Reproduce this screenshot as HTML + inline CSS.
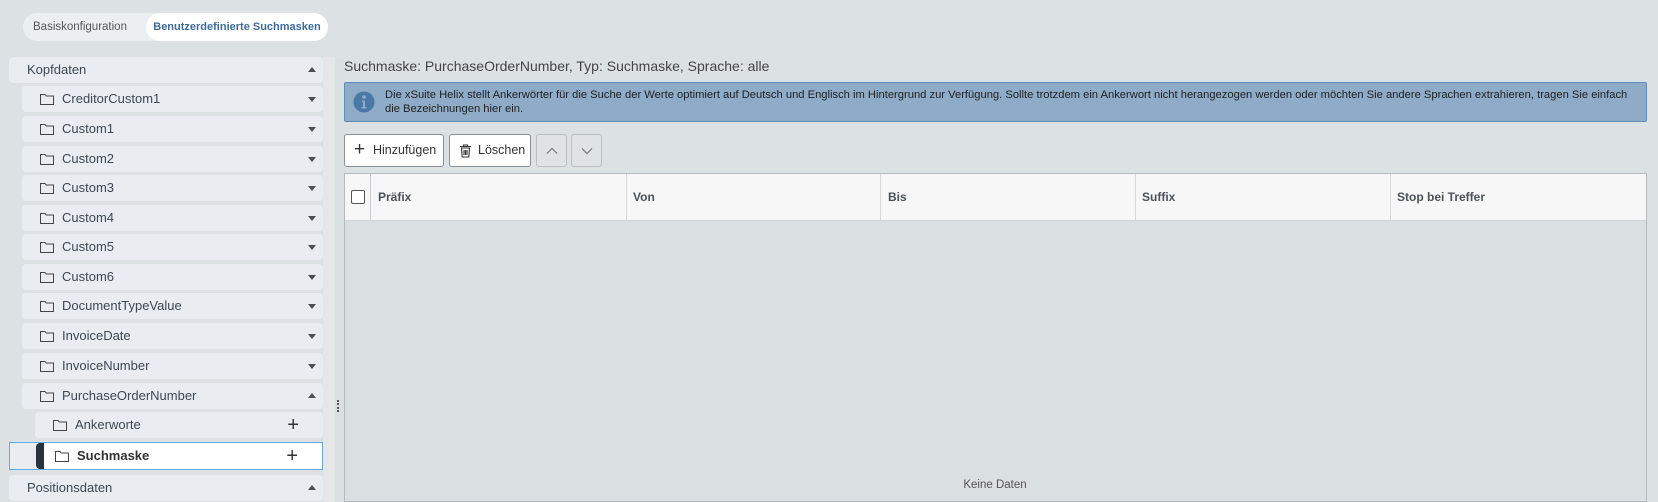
<!DOCTYPE html>
<html><head><meta charset="utf-8"><style>
*{box-sizing:border-box;margin:0;padding:0}
body{width:1658px;height:502px;overflow:hidden;background:#dce1e4;font-family:"Liberation Sans",sans-serif;color:#3e4852;position:relative}
.a{position:absolute}
.pill{left:23px;top:13px;width:305px;height:28px;background:#eceff1;border-radius:14px}
.tab1{left:33px;top:13px;height:28px;line-height:28px;font-size:11.5px;color:#555}
.tab2{left:146px;top:13px;width:182px;height:28px;line-height:28px;background:#fff;border-radius:14px;font-size:11px;font-weight:bold;color:#3d6c9c;text-align:center}
.it{height:26px;background:#e9edf1;border-radius:4px;font-size:13px;line-height:26px;right:1335px}
.it svg.f{position:absolute;top:7px}
.caret{position:absolute;right:7px;top:11px;width:0;height:0;border-left:4.5px solid transparent;border-right:4.5px solid transparent}
.dn{border-top:5px solid #4a4f55}
.up{top:10px;border-bottom:5px solid #4a4f55}
.plus{position:absolute;right:24px;top:0;font-size:20px;color:#333;font-weight:normal}
.strip{left:323px;top:57px;width:12px;height:445px;background:#e6e6e6}
.btn{top:134px;height:33px;background:#fff;border:1px solid #8a9199;border-radius:3px;font-size:12.5px;line-height:31px;color:#333}
.btnd{top:134px;height:33px;background:#dfe3e6;border:1px solid #b8bec3;border-radius:3px}
.th{font-size:12px;font-weight:bold;color:#4a525a}
</style></head><body>
<div class="a pill"></div>
<div class="a tab1">Basiskonfiguration</div>
<div class="a tab2">Benutzerdefinierte Suchmasken</div>

<div class="a strip"></div>
<div class="a" style="left:335px;top:57px;width:9px;height:445px;background:#dadfe2"></div>
<div class="a" style="left:337px;top:400px;width:2px;height:12px;border-left:2px dotted #555"></div>

<div class="a it" style="left:9px;top:57px;padding-left:18px">Kopfdaten<span class="caret up"></span></div>

<svg width="0" height="0" style="position:absolute"><defs><symbol id="fd" viewBox="0 0 14 12"><path d="M0.5 1.5h4.5l1.2 1.5h7.3v8.5H0.5z" fill="none" stroke="#444" stroke-width="1"/></symbol></defs></svg>

<div class="a it" style="left:22px;top:86px;padding-left:40px"><svg class="f" style="left:18px" width="14" height="12"><use href="#fd"/></svg>CreditorCustom1<span class="caret dn"></span></div>
<div class="a it" style="left:22px;top:116px;padding-left:40px"><svg class="f" style="left:18px" width="14" height="12"><use href="#fd"/></svg>Custom1<span class="caret dn"></span></div>
<div class="a it" style="left:22px;top:146px;padding-left:40px"><svg class="f" style="left:18px" width="14" height="12"><use href="#fd"/></svg>Custom2<span class="caret dn"></span></div>
<div class="a it" style="left:22px;top:175px;padding-left:40px"><svg class="f" style="left:18px" width="14" height="12"><use href="#fd"/></svg>Custom3<span class="caret dn"></span></div>
<div class="a it" style="left:22px;top:205px;padding-left:40px"><svg class="f" style="left:18px" width="14" height="12"><use href="#fd"/></svg>Custom4<span class="caret dn"></span></div>
<div class="a it" style="left:22px;top:234px;padding-left:40px"><svg class="f" style="left:18px" width="14" height="12"><use href="#fd"/></svg>Custom5<span class="caret dn"></span></div>
<div class="a it" style="left:22px;top:264px;padding-left:40px"><svg class="f" style="left:18px" width="14" height="12"><use href="#fd"/></svg>Custom6<span class="caret dn"></span></div>
<div class="a it" style="left:22px;top:293px;padding-left:40px"><svg class="f" style="left:18px" width="14" height="12"><use href="#fd"/></svg>DocumentTypeValue<span class="caret dn"></span></div>
<div class="a it" style="left:22px;top:323px;padding-left:40px"><svg class="f" style="left:18px" width="14" height="12"><use href="#fd"/></svg>InvoiceDate<span class="caret dn"></span></div>
<div class="a it" style="left:22px;top:353px;padding-left:40px"><svg class="f" style="left:18px" width="14" height="12"><use href="#fd"/></svg>InvoiceNumber<span class="caret dn"></span></div>
<div class="a it" style="left:22px;top:383px;padding-left:40px"><svg class="f" style="left:18px" width="14" height="12"><use href="#fd"/></svg>PurchaseOrderNumber<span class="caret up"></span></div>
<div class="a it" style="left:35px;top:412px;padding-left:40px"><svg class="f" style="left:18px" width="14" height="12"><use href="#fd"/></svg>Ankerworte<span class="plus">+</span></div>
<div class="a" style="left:9px;top:442px;width:314px;height:28px;border:1px solid #6aa8e0;background:#e9edf1"></div>
<div class="a" style="left:36px;top:443px;width:286px;height:26px;background:#fff;border-radius:4px;border-left:8px solid #2a333d;font-size:13px;line-height:26px;font-weight:bold;padding-left:33px;color:#333"><svg class="f" style="position:absolute;left:11px;top:7px" width="14" height="12"><use href="#fd"/></svg>Suchmaske<span class="plus" style="right:24px">+</span></div>
<div class="a it" style="left:9px;top:475px;padding-left:18px">Positionsdaten<span class="caret up"></span></div>

<div class="a" style="left:344px;top:58px;font-size:14px;color:#444">Suchmaske: PurchaseOrderNumber, Typ: Suchmaske, Sprache: alle</div>
<div class="a" style="left:344px;top:82px;width:1303px;height:40px;background:#8eabc7;border:1px solid #5d8cbb;border-radius:2px"></div>
<svg class="a" style="left:353px;top:91px" width="22" height="22"><circle cx="11" cy="11" r="10.5" fill="#4a79a7"/><circle cx="11" cy="6" r="1.8" fill="#8eabc7"/><path d="M9 9.5h3v6.5h1.5v1.5h-5v-1.5h1.5v-5h-1z" fill="#8eabc7"/></svg>
<div class="a" style="left:385px;top:88px;width:1265px;white-space:nowrap;font-size:11.2px;line-height:14px;color:#222">Die xSuite Helix stellt Ankerwörter für die Suche der Werte optimiert auf Deutsch und Englisch im Hintergrund zur Verfügung. Sollte trotzdem ein Ankerwort nicht herangezogen werden oder möchten Sie andere Sprachen extrahieren, tragen Sie einfach<br>die Bezeichnungen hier ein.</div>

<div class="a btn" style="left:344px;width:100px;padding-left:28px">Hinzufügen<span class="a" style="left:9px;top:-1px;font-size:19px">+</span></div>
<div class="a btn" style="left:449px;width:82px;padding-left:28px">Löschen<svg class="a" style="left:9px;top:9px" width="13" height="14"><path d="M1 2.5h11M4.5 2.5V1h4v1.5M2.5 4h8l-.7 9H3.2z M5 6v5M6.5 6v5M8 6v5" fill="none" stroke="#333" stroke-width="1.1"/></svg></div>
<div class="a btnd" style="left:536px;width:31px"><svg class="a" style="left:9px;top:12px" width="12" height="8"><path d="M1 6.5L6 1.5L11 6.5" fill="none" stroke="#777" stroke-width="1.2"/></svg></div>
<div class="a btnd" style="left:571px;width:31px"><svg class="a" style="left:9px;top:12px" width="12" height="8"><path d="M1 1.5L6 6.5L11 1.5" fill="none" stroke="#777" stroke-width="1.2"/></svg></div>

<div class="a" style="left:344px;top:173px;width:1303px;height:329px;border:1px solid #b4babf;background:#dadfe2"></div>
<div class="a" style="left:345px;top:174px;width:1301px;height:47px;background:#f7f7f7;border-bottom:1px solid #d0d4d7"></div>
<div class="a" style="left:351px;top:190px;width:14px;height:14px;border:1px solid #555;border-radius:2px;background:#fff"></div>
<div class="a" style="left:370px;top:174px;width:1px;height:47px;background:#c8ccd0"></div>
<div class="a" style="left:626px;top:174px;width:1px;height:47px;background:#d6d9dc"></div>
<div class="a" style="left:880px;top:174px;width:1px;height:47px;background:#d6d9dc"></div>
<div class="a" style="left:1135px;top:174px;width:1px;height:47px;background:#d6d9dc"></div>
<div class="a" style="left:1390px;top:174px;width:1px;height:47px;background:#d6d9dc"></div>
<div class="a th" style="left:378px;top:190px">Präfix</div>
<div class="a th" style="left:633px;top:190px">Von</div>
<div class="a th" style="left:888px;top:190px">Bis</div>
<div class="a th" style="left:1142px;top:190px">Suffix</div>
<div class="a th" style="left:1397px;top:190px">Stop bei Treffer</div>
<div class="a" style="left:945px;top:479px;width:100px;text-align:center;font-size:11.5px;color:#555">Keine Daten</div>
</body></html>
